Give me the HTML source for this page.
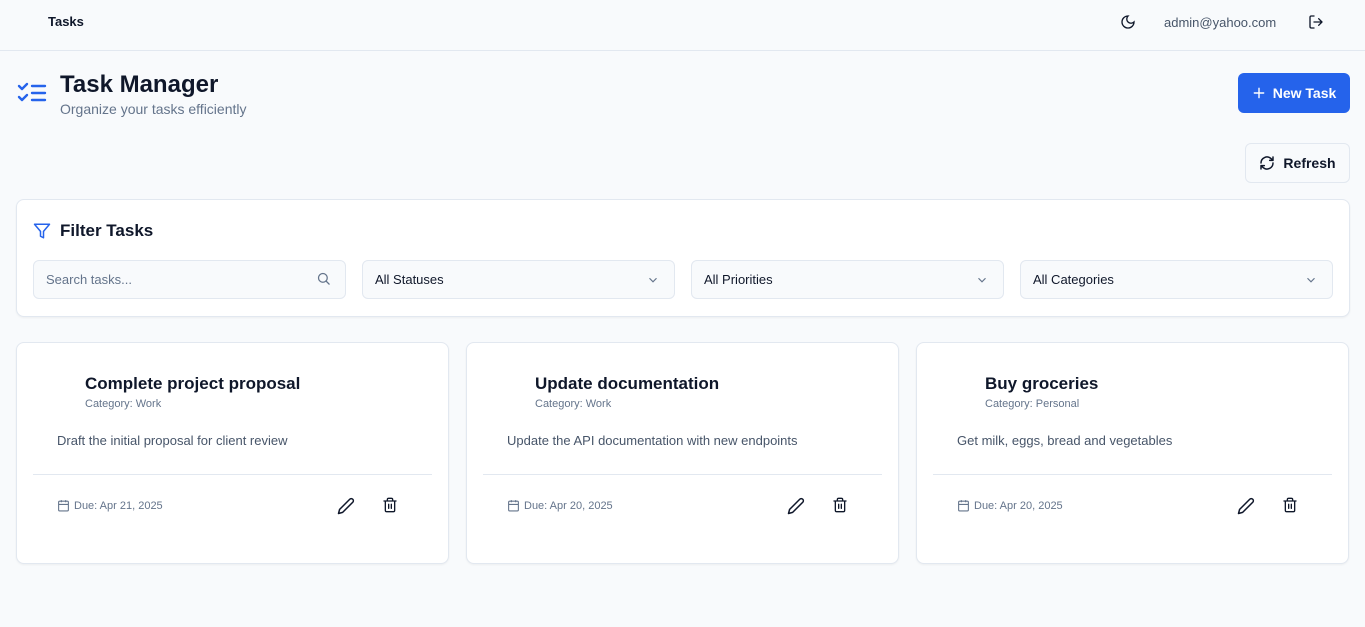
<!DOCTYPE html>
<html><head><meta charset="utf-8"><style>
*{box-sizing:border-box;margin:0;padding:0}
body{width:1365px;height:627px;background:#f8fafc;font-family:"Liberation Sans",sans-serif;color:#0f172a;position:relative;overflow:hidden}
.abs{position:absolute}
.nav{left:0;top:0;width:1365px;height:51px;border-bottom:1px solid #e2e8f0;background:#f8fafc}
svg{display:block}
.btn{border-radius:6px;display:flex;align-items:center;justify-content:center;font-weight:bold;font-size:14px}
.panel{background:#fff;border:1px solid #e2e8f0;border-radius:8px;box-shadow:0 1px 2px rgba(0,0,0,.05)}
.field{top:260px;height:39px;border:1px solid #e2e8f0;border-radius:6px;background:#f8fafc;font-size:13px;padding-left:12px;display:flex;align-items:center}
.field svg{position:absolute;right:14px;top:12px}
.card{top:342px;width:433px;height:222px}
.card h3{position:absolute;left:68px;top:31px;font-size:17px;font-weight:bold;color:#0f172a}
.card .cat{position:absolute;left:68px;top:55px;font-size:11px;color:#64748b}
.card .desc{position:absolute;left:40px;top:90px;font-size:13px;color:#475569}
.card .hr{position:absolute;left:16px;right:16px;top:131px;border-top:1px solid #e2e8f0}
.card .due{position:absolute;left:40px;top:156px;font-size:11px;color:#64748b;display:flex;align-items:center;gap:4px}
.card .ed{position:absolute;left:320px;top:154px}
.card .del{position:absolute;left:365px;top:154px}
</style></head><body>
<div class="abs nav">
 <div class="abs" style="left:48px;top:14px;font-size:13px;font-weight:bold">Tasks</div>
 <svg class="abs" style="left:1120px;top:14px" width="16" height="16" viewBox="0 0 24 24" fill="none" stroke="#0f172a" stroke-width="2" stroke-linecap="round"><path d="M12 3a6 6 0 0 0 9 9 9 9 0 1 1-9-9Z"/></svg>
 <div class="abs" style="left:1164px;top:15px;font-size:13px;color:#475569">admin@yahoo.com</div>
 <svg class="abs" style="left:1308px;top:14px" width="16" height="16" viewBox="0 0 24 24" fill="none" stroke="#0f172a" stroke-width="2" stroke-linecap="round" stroke-linejoin="round"><path d="M9 21H5a2 2 0 0 1-2-2V5a2 2 0 0 1 2-2h4M16 17l5-5-5-5M21 12H9"/></svg>
</div>
<svg class="abs" style="left:17px;top:81px" width="30" height="24" viewBox="0 0 30 24" fill="none" stroke="#2563eb" stroke-width="2.4" stroke-linecap="round" stroke-linejoin="round"><path d="M2 5l3 3 5-5M2 16l3 3 5-5M15 5h13M15 12h13M15 19h13"/></svg>
<div class="abs" style="left:60px;top:71px;font-size:24px;font-weight:bold">Task Manager</div>
<div class="abs" style="left:60px;top:101px;font-size:14px;color:#64748b">Organize your tasks efficiently</div>
<div class="abs btn" style="left:1238px;top:73px;width:112px;height:40px;background:#2563eb;color:#fff"><svg width="14" height="14" viewBox="0 0 24 24" fill="none" stroke="#fff" stroke-width="2.4" stroke-linecap="round" style="margin-right:7px"><path d="M12 4v16M4 12h16"/></svg>New Task</div>
<div class="abs btn" style="left:1245px;top:143px;width:105px;height:40px;background:#f8fafc;border:1px solid #e2e8f0;color:#0f172a"><svg width="16" height="16" viewBox="0 0 24 24" fill="none" stroke="#0f172a" stroke-width="2.2" stroke-linecap="round" stroke-linejoin="round" style="margin-right:8px"><path d="M3 12a9 9 0 0 1 15-6.7L21 8M21 3v5h-5M21 12a9 9 0 0 1-15 6.7L3 16M8 16H3v5"/></svg>Refresh</div>
<div class="abs panel" style="left:16px;top:199px;width:1334px;height:118px">
 <svg class="abs" style="left:16px;top:22px" width="18" height="18" viewBox="0 0 24 24" fill="none" stroke="#2563eb" stroke-width="2" stroke-linejoin="round"><path d="M22 3H2l8 9.5V19l4 2v-8.5Z"/></svg>
 <div class="abs" style="left:43px;top:21px;font-size:17px;font-weight:bold">Filter Tasks</div>
</div>
<div class="abs field" style="left:33px;width:313px;color:#64748b">Search tasks...<svg width="15" height="15" viewBox="0 0 24 24" fill="none" stroke="#64748b" stroke-width="2" stroke-linecap="round" style="top:10px"><circle cx="11" cy="11" r="7"/><path d="M21 21l-5-5"/></svg></div>
<div class="abs field" style="left:362px;width:313px">All Statuses<svg width="14" height="14" viewBox="0 0 24 24" fill="none" stroke="#64748b" stroke-width="2"><path d="M6 9l6 6 6-6"/></svg></div>
<div class="abs field" style="left:691px;width:313px">All Priorities<svg width="14" height="14" viewBox="0 0 24 24" fill="none" stroke="#64748b" stroke-width="2"><path d="M6 9l6 6 6-6"/></svg></div>
<div class="abs field" style="left:1020px;width:313px">All Categories<svg width="14" height="14" viewBox="0 0 24 24" fill="none" stroke="#64748b" stroke-width="2"><path d="M6 9l6 6 6-6"/></svg></div>

<div class="abs panel card" style="left:16px"><h3>Complete project proposal</h3><div class="cat">Category: Work</div><div class="desc">Draft the initial proposal for client review</div><div class="hr"></div>
<div class="due"><svg width="13" height="13" viewBox="0 0 24 24" fill="none" stroke="#64748b" stroke-width="2"><rect x="3" y="4" width="18" height="18" rx="2"/><path d="M16 2v4M8 2v4M3 10h18"/></svg>Due: Apr 21, 2025</div>
<svg class="ed" width="18" height="18" viewBox="0 0 24 24" fill="none" stroke="#0f172a" stroke-width="2" stroke-linejoin="round"><path d="M17 3a2.8 2.8 0 0 1 4 4L7.5 20.5 2 22l1.5-5.5Z"/></svg>
<svg class="del" width="16" height="16" viewBox="0 0 24 24" fill="none" stroke="#0f172a" stroke-width="2" stroke-linecap="round"><path d="M3 6h18M19 6v14a2 2 0 0 1-2 2H7a2 2 0 0 1-2-2V6M8 6V4a2 2 0 0 1 2-2h4a2 2 0 0 1 2 2v2M10 11v6M14 11v6"/></svg></div>

<div class="abs panel card" style="left:466px"><h3>Update documentation</h3><div class="cat">Category: Work</div><div class="desc">Update the API documentation with new endpoints</div><div class="hr"></div>
<div class="due"><svg width="13" height="13" viewBox="0 0 24 24" fill="none" stroke="#64748b" stroke-width="2"><rect x="3" y="4" width="18" height="18" rx="2"/><path d="M16 2v4M8 2v4M3 10h18"/></svg>Due: Apr 20, 2025</div>
<svg class="ed" width="18" height="18" viewBox="0 0 24 24" fill="none" stroke="#0f172a" stroke-width="2" stroke-linejoin="round"><path d="M17 3a2.8 2.8 0 0 1 4 4L7.5 20.5 2 22l1.5-5.5Z"/></svg>
<svg class="del" width="16" height="16" viewBox="0 0 24 24" fill="none" stroke="#0f172a" stroke-width="2" stroke-linecap="round"><path d="M3 6h18M19 6v14a2 2 0 0 1-2 2H7a2 2 0 0 1-2-2V6M8 6V4a2 2 0 0 1 2-2h4a2 2 0 0 1 2 2v2M10 11v6M14 11v6"/></svg></div>

<div class="abs panel card" style="left:916px"><h3>Buy groceries</h3><div class="cat">Category: Personal</div><div class="desc">Get milk, eggs, bread and vegetables</div><div class="hr"></div>
<div class="due"><svg width="13" height="13" viewBox="0 0 24 24" fill="none" stroke="#64748b" stroke-width="2"><rect x="3" y="4" width="18" height="18" rx="2"/><path d="M16 2v4M8 2v4M3 10h18"/></svg>Due: Apr 20, 2025</div>
<svg class="ed" width="18" height="18" viewBox="0 0 24 24" fill="none" stroke="#0f172a" stroke-width="2" stroke-linejoin="round"><path d="M17 3a2.8 2.8 0 0 1 4 4L7.5 20.5 2 22l1.5-5.5Z"/></svg>
<svg class="del" width="16" height="16" viewBox="0 0 24 24" fill="none" stroke="#0f172a" stroke-width="2" stroke-linecap="round"><path d="M3 6h18M19 6v14a2 2 0 0 1-2 2H7a2 2 0 0 1-2-2V6M8 6V4a2 2 0 0 1 2-2h4a2 2 0 0 1 2 2v2M10 11v6M14 11v6"/></svg></div>
</body></html>
